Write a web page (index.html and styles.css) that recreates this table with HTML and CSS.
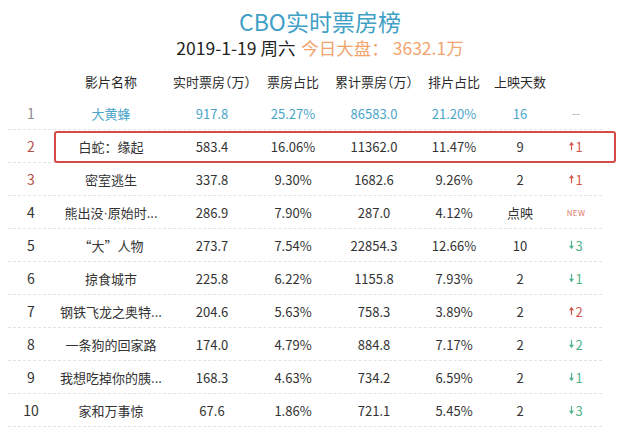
FILE: index.html
```html
<!DOCTYPE html>
<html lang="zh-CN">
<head>
<meta charset="utf-8">
<title>CBO实时票房榜</title>
<link rel="stylesheet" href="styles.css">
</head>
<body>
<div class="page">
  <header class="head">
    <h1 class="title">CBO实时票房榜</h1>
    <p class="sub"><span class="date">2019-1-19 周六</span> <span class="total">今日大盘： 3632.1万</span></p>
  </header>
  <div class="table">
    <div class="row hdr">
      <span></span><span>影片名称</span><span>实时票房（万）</span><span>票房占比</span><span>累计票房（万）</span><span>排片占比</span><span>上映天数</span><span></span>
    </div>
    <div class="row first">
      <span class="rank grey">1</span><span>大黄蜂</span><span>917.8</span><span>25.27%</span><span>86583.0</span><span>21.20%</span><span>16</span><span class="dash">--</span>
    </div>
    <div class="row hl">
      <span class="rank red">2</span><span>白蛇：缘起</span><span>583.4</span><span>16.06%</span><span>11362.0</span><span>11.47%</span><span>9</span><span class="up"><svg class="ar" viewBox="0 0 6 10"><path d="M3 0 L6 4 L0 4 Z"/><rect x="2.3" y="3" width="1.4" height="7"/></svg>1</span>
      <i class="box"></i>
    </div>
    <div class="row">
      <span class="rank red">3</span><span>密室逃生</span><span>337.8</span><span>9.30%</span><span>1682.6</span><span>9.26%</span><span>2</span><span class="up"><svg class="ar" viewBox="0 0 6 10"><path d="M3 0 L6 4 L0 4 Z"/><rect x="2.3" y="3" width="1.4" height="7"/></svg>1</span>
    </div>
    <div class="row">
      <span class="rank">4</span><span>熊出没<b class="dot">·</b>原始时...</span><span>286.9</span><span>7.90%</span><span>287.0</span><span>4.12%</span><span>点映</span><span class="new">NEW</span>
    </div>
    <div class="row">
      <span class="rank">5</span><span>“大”人物</span><span>273.7</span><span>7.54%</span><span>22854.3</span><span>12.66%</span><span>10</span><span class="down"><svg class="ar" viewBox="0 0 6 10"><path d="M3 10 L6 6 L0 6 Z"/><rect x="2.3" y="0" width="1.4" height="7"/></svg>3</span>
    </div>
    <div class="row">
      <span class="rank">6</span><span>掠食城市</span><span>225.8</span><span>6.22%</span><span>1155.8</span><span>7.93%</span><span>2</span><span class="down"><svg class="ar" viewBox="0 0 6 10"><path d="M3 10 L6 6 L0 6 Z"/><rect x="2.3" y="0" width="1.4" height="7"/></svg>1</span>
    </div>
    <div class="row">
      <span class="rank">7</span><span>钢铁飞龙之奥特...</span><span>204.6</span><span>5.63%</span><span>758.3</span><span>3.89%</span><span>2</span><span class="up"><svg class="ar" viewBox="0 0 6 10"><path d="M3 0 L6 4 L0 4 Z"/><rect x="2.3" y="3" width="1.4" height="7"/></svg>2</span>
    </div>
    <div class="row">
      <span class="rank">8</span><span>一条狗的回家路</span><span>174.0</span><span>4.79%</span><span>884.8</span><span>7.17%</span><span>2</span><span class="down"><svg class="ar" viewBox="0 0 6 10"><path d="M3 10 L6 6 L0 6 Z"/><rect x="2.3" y="0" width="1.4" height="7"/></svg>2</span>
    </div>
    <div class="row">
      <span class="rank">9</span><span>我想吃掉你的胰...</span><span>168.3</span><span>4.63%</span><span>734.2</span><span>6.59%</span><span>2</span><span class="down"><svg class="ar" viewBox="0 0 6 10"><path d="M3 10 L6 6 L0 6 Z"/><rect x="2.3" y="0" width="1.4" height="7"/></svg>1</span>
    </div>
    <div class="row">
      <span class="rank">10</span><span>家和万事惊</span><span>67.6</span><span>1.86%</span><span>721.1</span><span>5.45%</span><span>2</span><span class="down"><svg class="ar" viewBox="0 0 6 10"><path d="M3 10 L6 6 L0 6 Z"/><rect x="2.3" y="0" width="1.4" height="7"/></svg>3</span>
    </div>
  </div>
</div>
</body>
</html>
```

FILE: styles.css
```css
* { box-sizing: border-box; }
html, body { margin: 0; padding: 0; background: #fff; }
body {
  width: 640px;
  height: 436px;
  overflow: hidden;
  font-family: "Noto Sans CJK SC", "Microsoft YaHei", sans-serif;
  color: #333;
}
.page { padding-top: 6px; }
.head { text-align: center; height: 60px; }
.title {
  margin: 0;
  font-size: 23px;
  line-height: 30px;
  font-weight: 400;
  color: #3f9fc6;
}
.sub {
  margin: 0;
  font-size: 17.5px;
  line-height: 24px;
  color: #222;
}
.total { color: #f1a46e; margin-left: 2px; }
.table { margin-left: 8px; width: 594px; }
.row {
  position: relative;
  display: grid;
  grid-template-columns: 46px 114px 88px 74px 88px 72px 60px 52px;
  height: 33px;
  align-items: center;
  text-align: center;
  font-size: 13px;
  white-space: nowrap;
  border-bottom: 1px dashed #e3e3e3;
}
.row > span { display: flex; justify-content: center; align-items: center; overflow: visible; }
.row.hdr {
  height: 31px;
  border-bottom: none;
  color: #2a2a2a;
  font-size: 13px;
  font-feature-settings: "halt";
}
.row.first { color: #4aa5ca; }
.dot { font-family: "Liberation Sans", sans-serif; font-weight: 400; }
.rank { font-size: 14px; }
.rank.grey { color: #8a8a8a; }
.rank.red { color: #b5524d; }
.dash { color: #aaa; font-size: 11px; }
.up { color: #d4574e; font-size: 13px; }
.down { color: #4fb48a; font-size: 13px; }
.ar { width: 5px; height: 10px; fill: currentColor; margin-right: 1px; }
.new { color: #e07a6a; font-size: 8px; letter-spacing: 0.3px; }
.box {
  position: absolute;
  left: 46px;
  right: -14px;
  top: 1px;
  bottom: -1px;
  border: 2px solid #d44a45;
  border-radius: 3px;
}
```
